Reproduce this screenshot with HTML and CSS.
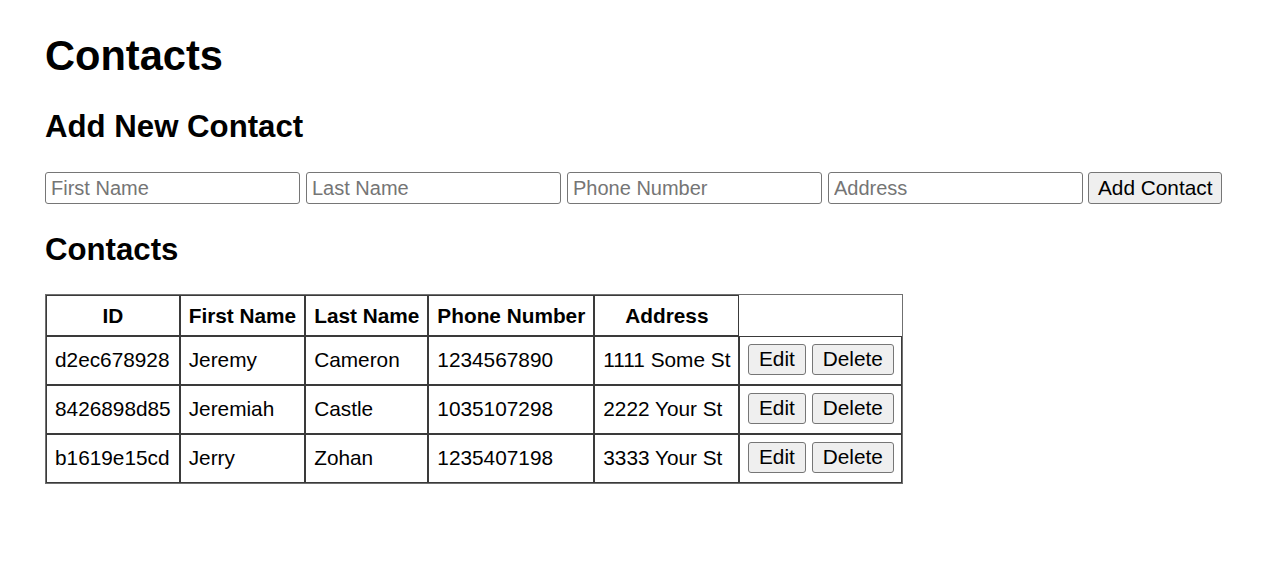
FILE: index.html
```html
<!DOCTYPE html>
<html>
<head>
<meta charset="utf-8">
<title>Contacts</title>
<link rel="stylesheet" href="styles.css">
</head>
<body>
<div class="app">
  <h1 class="title">Contacts</h1>
  <h2 class="subtitle subtitle-add">Add New Contact</h2>
  <form class="add-form">
    <input class="field" type="text" placeholder="First Name">
    <input class="field" type="text" placeholder="Last Name">
    <input class="field" type="text" placeholder="Phone Number">
    <input class="field" type="text" placeholder="Address">
    <button class="btn btn-add" type="button">Add Contact</button>
  </form>
  <h2 class="subtitle subtitle-list">Contacts</h2>
  <table class="contacts">
    <thead>
      <tr>
        <th>ID</th>
        <th>First Name</th>
        <th>Last Name</th>
        <th>Phone Number</th>
        <th>Address</th>
      </tr>
    </thead>
    <tbody>
      <tr>
        <td>d2ec678928</td>
        <td>Jeremy</td>
        <td>Cameron</td>
        <td>1234567890</td>
        <td>1111 Some St</td>
        <td class="actions"><button class="btn btn-row" type="button">Edit</button><button class="btn btn-row" type="button">Delete</button></td>
      </tr>
      <tr>
        <td>8426898d85</td>
        <td>Jeremiah</td>
        <td>Castle</td>
        <td>1035107298</td>
        <td>2222 Your St</td>
        <td class="actions"><button class="btn btn-row" type="button">Edit</button><button class="btn btn-row" type="button">Delete</button></td>
      </tr>
      <tr>
        <td>b1619e15cd</td>
        <td>Jerry</td>
        <td>Zohan</td>
        <td>1235407198</td>
        <td>3333 Your St</td>
        <td class="actions"><button class="btn btn-row" type="button">Edit</button><button class="btn btn-row" type="button">Delete</button></td>
      </tr>
    </tbody>
  </table>
</div>
</body>
</html>
```

FILE: styles.css
```css
html, body {
  margin: 0;
  padding: 0;
  background: #ffffff;
}

body {
  font-family: "Liberation Sans", Arial, sans-serif;
  color: #000000;
  font-size: 20.8px;
}

.app {
  padding: 32px 45px 0 45px;
}

.title {
  font-size: 41.6px;
  font-weight: bold;
  line-height: 48px;
  margin: 0 0 29px 0;
}

.subtitle {
  font-size: 31.2px;
  font-weight: bold;
  line-height: 36px;
  margin: 0;
}

.subtitle-add {
  margin-bottom: 27px;
}

.add-form {
  display: flex;
  align-items: center;
  gap: 6px;
  margin: 0;
}

.field {
  box-sizing: border-box;
  width: 255px;
  height: 32px;
  margin: 0;
  padding: 0 5px;
  border: 1px solid #767676;
  border-radius: 3px;
  font-family: "Liberation Sans", Arial, sans-serif;
  font-size: 20px;
  color: #000;
  background: #fff;
}

.field::placeholder {
  color: #757575;
}

.btn {
  box-sizing: border-box;
  margin: 0;
  border: 1px solid #767676;
  border-radius: 3px;
  background: #efefef;
  color: #000;
  font-family: "Liberation Sans", Arial, sans-serif;
  font-size: 20.8px;
  line-height: 1;
}

.btn-add {
  height: 32px;
  padding: 0 9px;
  margin-left: -1px;
}

.subtitle-list {
  margin-top: 28px;
  margin-bottom: 26px;
}

.contacts {
  border: 1px solid #707070;
  border-collapse: separate;
  border-spacing: 0;
  font-size: 20.8px;
}

.contacts th,
.contacts td {
  border: 1px solid #3a3a3a;
  line-height: 24px;
  text-align: left;
  white-space: nowrap;
  vertical-align: top;
}

.contacts th {
  font-weight: bold;
  text-align: center;
  padding: 7.5px 8px;
}

.contacts td {
  padding: 11px 8px 12px 8px;
}

.contacts td.actions {
  padding: 7px 7.5px 9px 7.5px;
}

.btn-row {
  height: 31px;
  padding: 0 10px;
  vertical-align: top;
}

.btn-row + .btn-row {
  margin-left: 6px;
}
```
